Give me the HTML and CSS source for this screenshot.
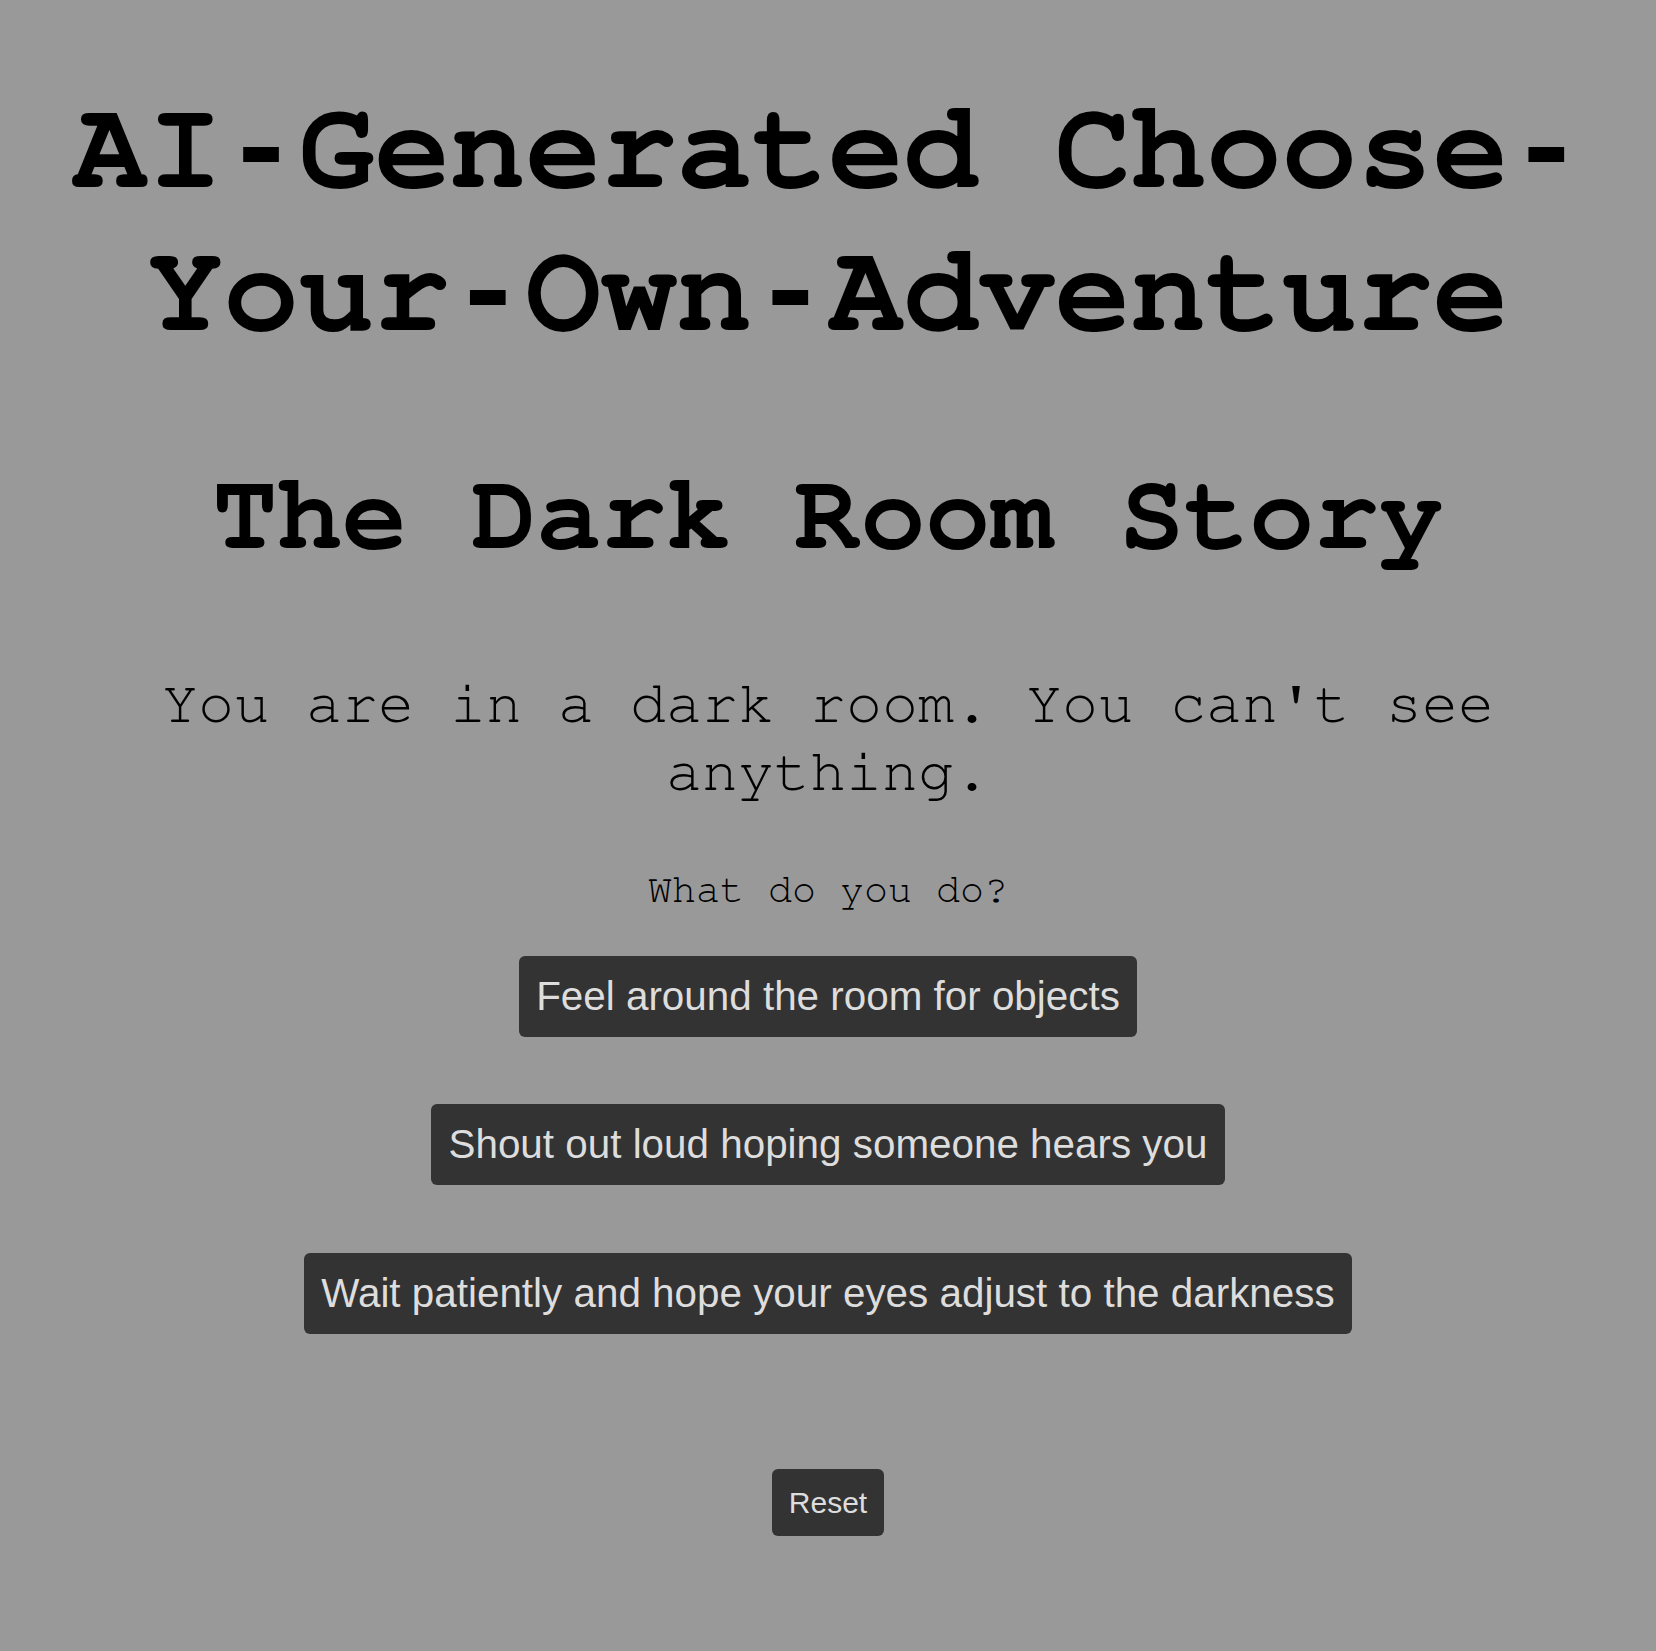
FILE: index.html
```html
<!DOCTYPE html>
<html lang="en">
<head>
<meta charset="utf-8">
<title>AI-Generated Choose-Your-Own-Adventure</title>
<link rel="stylesheet" href="styles.css">
</head>
<body>
<main class="page">
  <h1 class="title">AI<span class="dash">-</span>Generated Choose<span class="dash">-</span>Your<span class="dash">-</span>Own<span class="dash">-</span>Adventure</h1>
  <h2 class="story-title">The Dark Room Story</h2>
  <p class="story-text">You are in a dark room. You can't see anything.</p>
  <p class="prompt">What do you do?</p>
  <div class="choices">
    <button class="choice">Feel around the room for objects</button>
    <button class="choice">Shout out loud hoping someone hears you</button>
    <button class="choice">Wait patiently and hope your eyes adjust to the darkness</button>
  </div>
  <div class="reset-row">
    <button class="reset">Reset</button>
  </div>
</main>
</body>
</html>
```

FILE: styles.css
```css
html, body {
  background: #999999;
}
body {
  margin: 0;
  padding: 0 8px;
  font-family: "FreeMono", "Liberation Mono", "Courier New", monospace;
  color: #000;
}
.page {
  display: flex;
  flex-direction: column;
  align-items: center;
  text-align: center;
  padding-top: 78px;
  padding-bottom: 60px;
}
.title {
  margin: 0;
  font-size: 126px;
  font-weight: bold;
  line-height: 143.4px;
}
.dash {
  font-family: "Liberation Mono", "Courier New", monospace;
  line-height: 1;
}
.story-title {
  margin: 90.6px 0 0;
  font-size: 108px;
  font-weight: bold;
  line-height: 123px;
}
.story-text {
  margin: 92px 0 0;
  font-size: 60px;
  font-weight: normal;
  line-height: 68px;
}
.prompt {
  margin: 61.7px 0 0;
  font-size: 40px;
  line-height: 45.3px;
}
.choices {
  margin-top: 42.4px;
  display: flex;
  flex-direction: column;
  align-items: center;
  gap: 67.5px;
}
.choice, .reset {
  font-family: "Liberation Sans", Arial, sans-serif;
  background: #333333;
  color: #dddddd;
  border: none;
  border-radius: 6px;
  line-height: normal;
  cursor: pointer;
}
.choice {
  font-size: 40.4px;
  padding: 17px 17.5px;
}
.reset-row {
  margin-top: 135.3px;
}
.reset {
  font-size: 30px;
  padding: 16.5px 17px;
}
```
